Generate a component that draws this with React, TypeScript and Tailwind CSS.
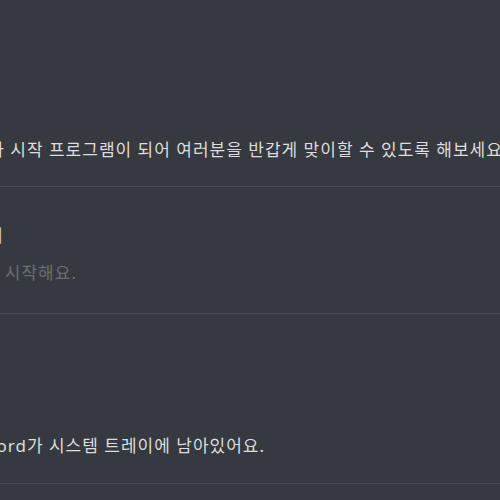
import React from 'react';

const FONT = "font-['Noto_Sans','Noto_Sans_CJK_KR',sans-serif]";

export default function App() {
  return (
    <div className={`h-[500px] w-[500px] overflow-hidden bg-[#36393f] ${FONT}`}>
      <div className="ml-[-190px] w-[900px] text-[17px] tracking-[1px]">
        {/* 시스템 시작 동작 */}
        <section className="pt-[140px]">
          <p className="whitespace-nowrap leading-[20px] text-[#dcddde]">
            컴퓨터를 켜면 Discord가 시작 프로그램이 되어 여러분을 반갑게 맞이할 수 있도록 해보세요.
          </p>
          <div className="mt-[26px] border-t border-[#46494f]" />
        </section>

        {/* 최소화 상태로 시작 */}
        <section className="pt-[38px]">
          <h3 className="whitespace-nowrap leading-[22px] font-medium text-[#c4c6c9]">
            최소화된 상태로 시작하기
          </h3>
          <p className="mt-[16px] whitespace-nowrap leading-[20px] text-[#6b6e74]">
            Discord가 백그라운드로 시작해요.
          </p>
          <div className="mt-[30px] border-t border-[#46494f]" />
        </section>

        {/* 트레이로 최소화 */}
        <section className="pt-[122px]">
          <p className="whitespace-nowrap leading-[20px] text-[#dcddde]">
            닫기 버튼을 누르면 Discord가 시스템 트레이에 남아있어요.
          </p>
          <div className="mt-[27px] border-t border-[#46494f]" />
        </section>
      </div>
    </div>
  );
}
